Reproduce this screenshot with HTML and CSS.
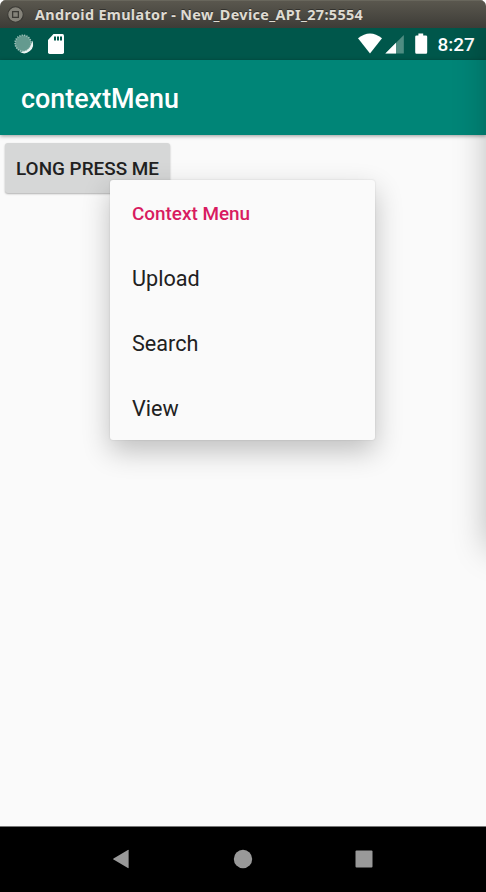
FILE: index.html
```html
<!DOCTYPE html>
<html lang="en">
<head>
<meta charset="utf-8">
<title>Android Emulator</title>
<link rel="stylesheet" href="styles.css">
</head>
<body>
<div class="window">
  <header class="titlebar">
    <svg class="window-button" viewBox="0 0 16 16"><circle cx="8" cy="8" r="7.3" fill="#85837a" stroke="#393833"/><rect x="5.3" y="5.3" width="5.4" height="5.4" fill="none" stroke="#3b3a35" stroke-width="1.2"/></svg>
    <span class="window-title">Android Emulator - New_Device_API_27:5554</span>
  </header>
  <div class="screen">
    <div class="statusbar">
      <svg class="status-left" viewBox="0 0 60 32"><circle cx="23.3" cy="15.5" r="8.3" fill="#649a8f"/><circle cx="23.1" cy="15.2" r="8" fill="none" stroke="#9fc2ba" stroke-width="1.6" stroke-dasharray="1.2 1.2"/><path d="M32.3 12.5A9 9 0 0 1 19 23.6Q28 24.5 30.5 18Q32 15 32.3 12.5Z" fill="#edf5f3"/></svg>
      <svg class="sd-card" viewBox="0 0 16 20"><path d="M5.5 0H14.5Q16 0 16 1.7V18.3Q16 20 14.3 20H1.7Q0 20 0 18.3V6Z" fill="#fff"/><path d="M6 2.6h2v4H6zM9 2.6h2v4H9zM12 2.6h2v4h-2z" fill="#00594c"/></svg>
      <svg class="status-right" viewBox="0 0 75 24"><path d="M0 6.2Q12-3.4 24 6.2L12 21.4Z" fill="#fff"/><path d="M45.8 3V21.5H27.3Z" fill="#4f8d82"/><path d="M38 10.8V21.5H27.3Z" fill="#fff"/><path d="M60.4 1.5h4.8v2h2.7q1.3 0 1.3 1.3v15.4q0 1.5-1.3 1.5H58.6q-1.4 0-1.4-1.5V4.8q0-1.3 1.4-1.3h1.8Z" fill="#fff"/></svg>
      <span class="clock">8:27</span>
    </div>
    <div class="toolbar">contextMenu</div>
    <main class="content">
      <button class="press-button">LONG PRESS ME</button>
      <div class="context-menu">
        <div class="menu-title">Context Menu</div>
        <div class="menu-item">Upload</div>
        <div class="menu-item">Search</div>
        <div class="menu-item">View</div>
      </div>
    </main>
    <div class="edge-shadow"></div>
  </div>
  <nav class="navbar">
    <svg viewBox="0 0 20 20"><path d="M17.6 1.3V18.7Q17.6 19.4 16.9 19L2.5 10.6Q1.7 10 2.5 9.4L16.9 1Q17.6.6 17.6 1.3Z"/></svg>
    <svg viewBox="0 0 20 20"><circle cx="10" cy="10" r="9.2"/></svg>
    <svg viewBox="0 0 20 20"><rect x="1.5" y="1.5" width="17" height="17" rx="1"/></svg>
  </nav>
</div>
</body>
</html>
```
FILE: styles.css
```css
* { box-sizing: border-box; }
body { margin: 0; background: #fff; font-family: Roboto, sans-serif; }
.window {
  width: 486px;
  height: 892px;
  display: flex;
  flex-direction: column;
  overflow: hidden;
  border-radius: 6px 6px 0 0;
}
.titlebar {
  height: 28px;
  flex: none;
  display: flex;
  align-items: center;
  padding: 1px 0 0 7px;
  background: linear-gradient(#5b584f, #3d3c37);
  box-shadow: inset 0 1px #68665c;
}
.window-button { width: 17px; height: 17px; }
.window-title {
  margin-left: 11px;
  font: bold 14.4px/20px "Noto Sans", sans-serif;
  letter-spacing: .34px;
  color: #dfdbd2;
  white-space: nowrap;
  text-shadow: 0 -1px #33322e;
}
.screen {
  position: relative;
  flex: 1;
  display: flex;
  flex-direction: column;
  overflow: hidden;
  background: #fafafa;
}
.statusbar {
  height: 32px;
  flex: none;
  display: flex;
  align-items: center;
  background: #00574b;
}
.status-left { width: 60px; height: 32px; margin-right: -12px; }
.sd-card { width: 16px; height: 20px; }
.status-right { width: 75px; height: 24px; margin-left: 294px; }
.clock {
  margin-left: 4.5px;
  padding-top: 1px;
  font-size: 19px;
  font-weight: 500;
  line-height: 24px;
  color: #fff;
}
.toolbar {
  height: 75px;
  flex: none;
  padding: 3px 0 0 21px;
  background: #008577;
  box-shadow: 0 1px 4px rgba(0, 0, 0, .4);
  font-size: 26.9px;
  font-weight: 500;
  line-height: 73px;
  color: #fff;
}
.content { padding: 8px 5px; }
.press-button {
  display: block;
  width: 165px;
  height: 50px;
  padding: 1px 0 0;
  border: 0;
  border-radius: 3px;
  background: #d6d7d7;
  box-shadow: 0 1px 2px rgba(0, 0, 0, .3);
  font: 500 18.9px/48px Roboto, sans-serif;
  color: #212121;
  white-space: nowrap;
}
.context-menu {
  position: absolute;
  left: 110px;
  top: 152px;
  width: 265px;
  height: 260px;
  padding: 1px 22px 0;
  border-radius: 3px;
  background: #fafafa;
  box-shadow: 0 11px 28px rgba(0, 0, 0, .24), 0 0 2px rgba(0, 0, 0, .14);
}
.menu-title, .menu-item { height: 65px; line-height: 65px; white-space: nowrap; }
.menu-title { font-size: 18.9px; font-weight: 500; color: #d81b60; }
.menu-item { font-size: 21.6px; color: #212121; }
.edge-shadow {
  position: absolute;
  left: 488px;
  top: -15px;
  width: 60px;
  height: 525px;
  box-shadow: 0 11px 34px rgba(0, 0, 0, .27);
}
.navbar {
  height: 66px;
  flex: none;
  display: grid;
  grid-template-columns: repeat(3, 121.5px);
  justify-content: center;
  justify-items: center;
  align-items: center;
  padding: 0 1px 1px 0;
  background: #000;
  box-shadow: inset 0 1px #777;
}
.navbar svg { width: 20px; height: 20px; fill: #999; }
```
